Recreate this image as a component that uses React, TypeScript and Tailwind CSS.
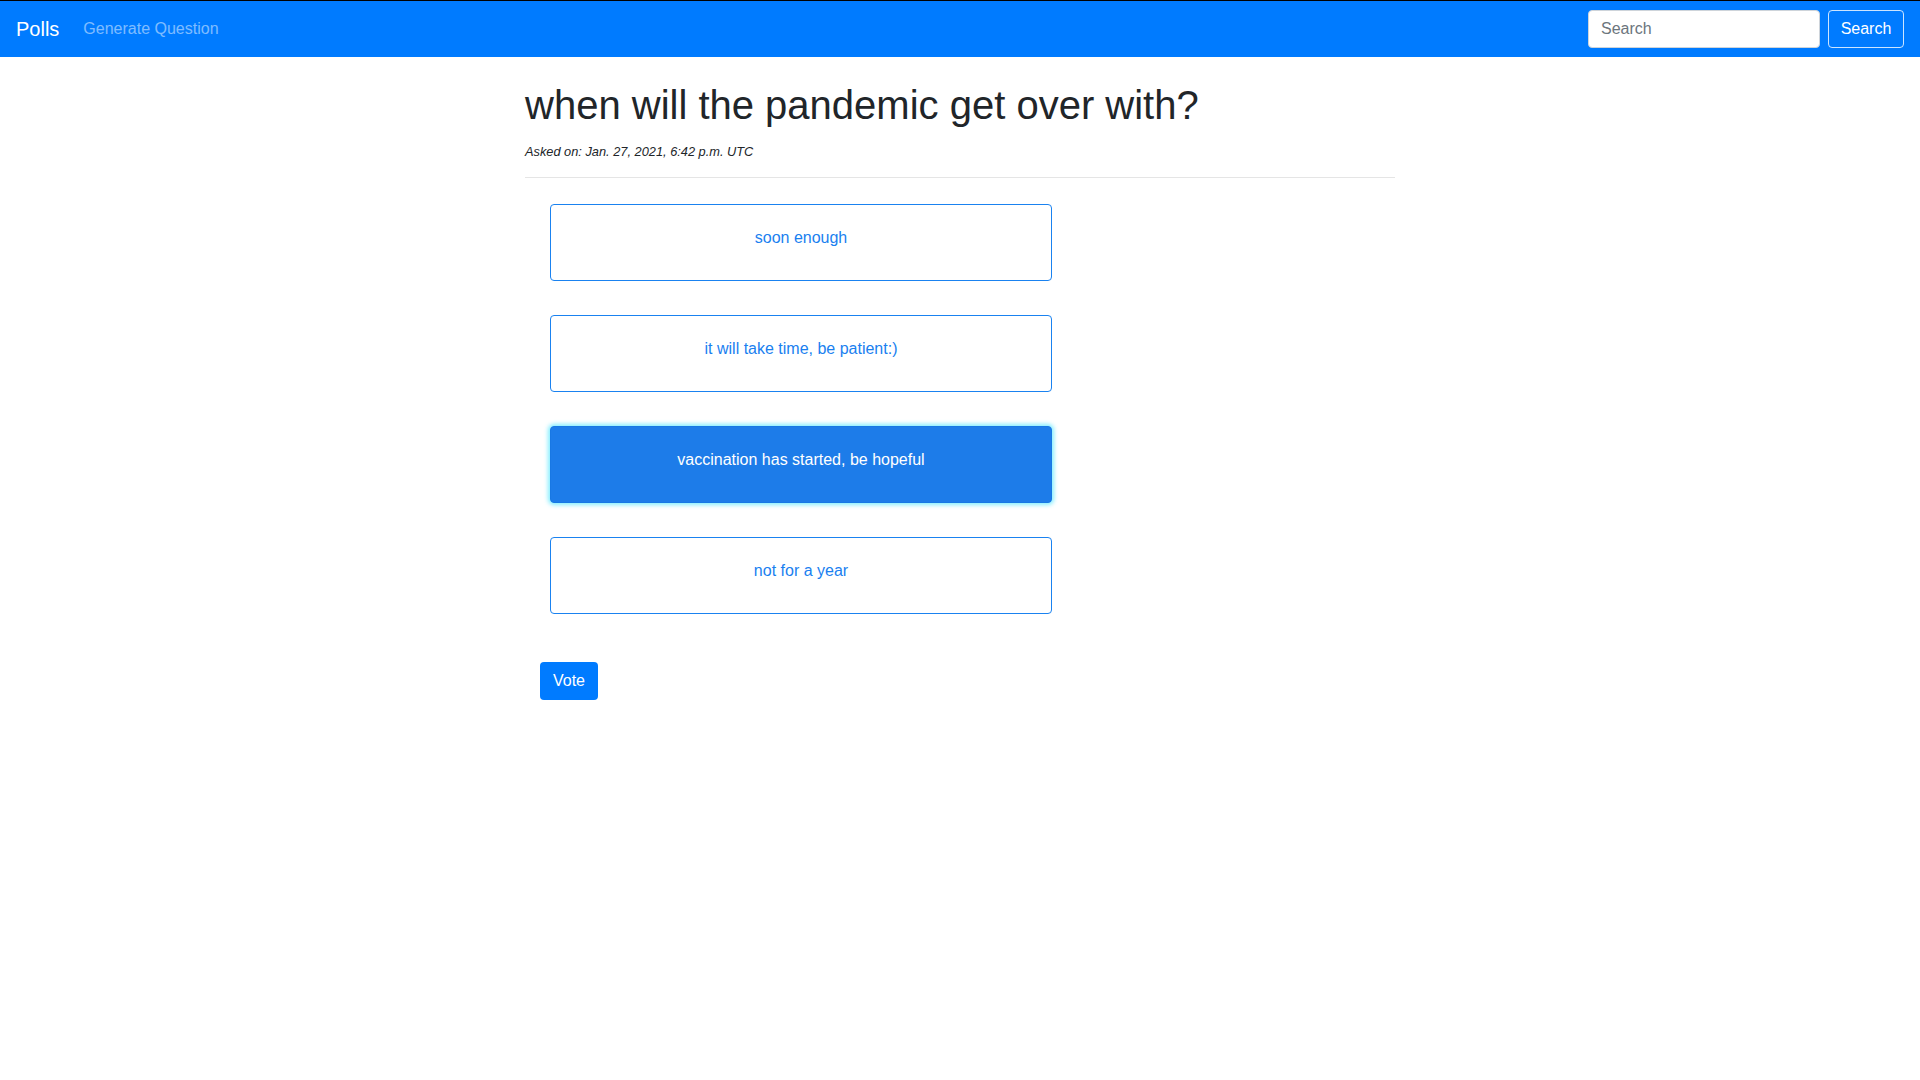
import { useState } from "react";

const choices = [
  "soon enough",
  "it will take time, be patient:)",
  "vaccination has started, be hopeful",
  "not for a year",
];

export default function App() {
  const [selected, setSelected] = useState(2);

  return (
    <div className="min-h-screen bg-white font-['Liberation_Sans',Arial,sans-serif] text-[#212529]">
      {/* Navbar */}
      <nav className="flex h-[57px] items-center border-t border-black bg-[#007bff] px-4">
        <a href="#" className="mr-4 text-xl leading-[30px] text-white">
          Polls
        </a>
        <a href="#" className="px-[8px] text-base text-white/50">
          Generate Question
        </a>
        <form className="ml-auto flex items-center" onSubmit={(e) => e.preventDefault()}>
          <input
            type="text"
            placeholder="Search"
            className="mr-2 h-[38px] w-[232px] rounded border border-[#ced4da] bg-white px-3 text-base text-[#495057] placeholder-[#6c757d] outline-none"
          />
          <button
            type="submit"
            className="h-[38px] w-[76px] rounded border border-white/80 text-base text-white"
          >
            Search
          </button>
        </form>
      </nav>

      {/* Question */}
      <main className="mx-auto w-[870px]">
        <h1 className="mt-[24px] text-[40px] leading-[48px] font-normal">when will the pandemic get over with?</h1>
        <p className="mt-[13px] text-[12.8px] italic leading-[19px]">Asked on: Jan. 27, 2021, 6:42 p.m. UTC</p>
        <hr className="mt-[16px] border-t border-black/10" />

        <div className="mt-[26px] ml-[25px] flex w-[502px] flex-col gap-[34px]">
          {choices.map((choice, i) => (
            <button
              key={i}
              type="button"
              onClick={() => setSelected(i)}
              className={
                i === selected
                  ? "h-[77px] rounded border border-[#1878e4] bg-[#1d7ce9] pb-[9px] text-base text-white shadow-[0_0_4px_2px_rgba(110,235,255,0.85)]"
                  : "h-[77px] rounded border border-[#1a82f0] bg-white pb-[9px] text-base text-[#1a7ff0]"
              }
            >
              {choice}
            </button>
          ))}
        </div>

        <button type="button" className="mt-[48px] ml-[15px] h-[38px] w-[58px] rounded bg-[#007bff] text-base text-white">
          Vote
        </button>
      </main>
    </div>
  );
}
